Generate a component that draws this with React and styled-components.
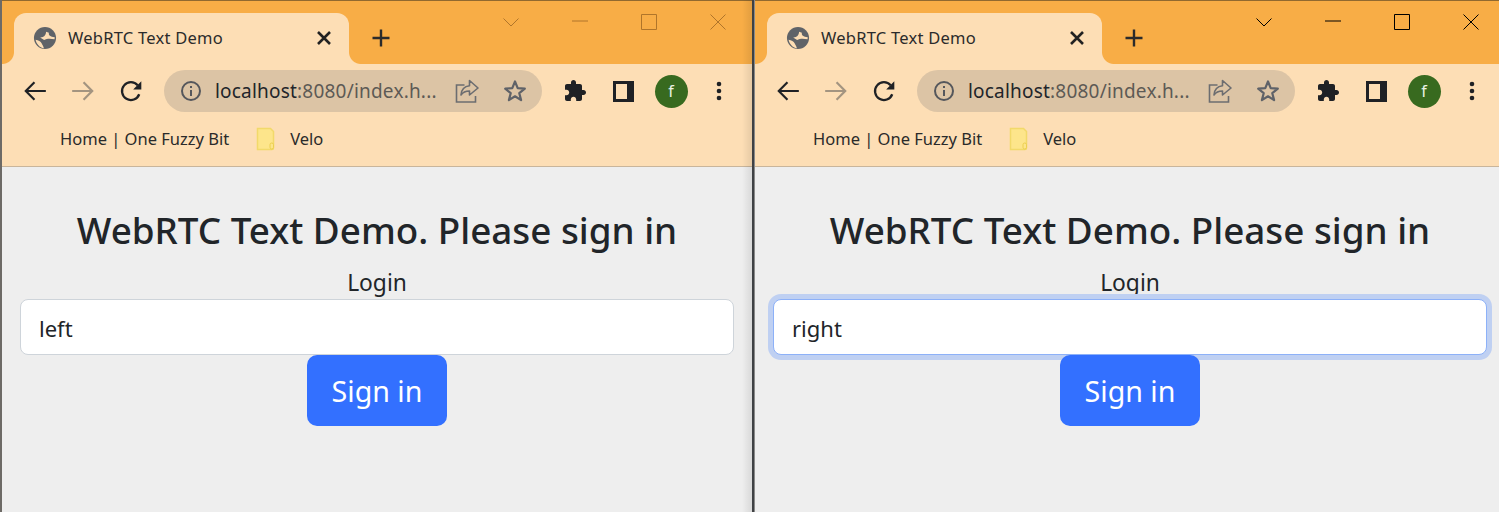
import React from "react";
import styled, { createGlobalStyle } from "styled-components";

const Global = createGlobalStyle`
  html, body { margin: 0; padding: 0; background: #eeeeee; overflow: hidden; }
  #root { width: 1499px; height: 512px; overflow: hidden; }
  * { box-sizing: border-box; }
`;

const FONT = `"Noto Sans", "Open Sans", sans-serif`;

const Desktop = styled.div`
  display: flex;
  width: 1499px;
  height: 512px;
  overflow: hidden;
  font-family: ${FONT};
`;

const BrowserWindow = styled.section`
  position: relative;
  flex: 0 0 auto;
  width: ${(p) => p.$width}px;
  height: 512px;
  padding-left: ${(p) => p.$edge}px;
  display: flex;
  flex-direction: column;
  background: #eeeeee;

  &::before {
    content: "";
    position: absolute;
    left: 0;
    top: 0;
    bottom: 0;
    width: ${(p) => p.$edge}px;
    background: #6d6a66;
  }
`;

const Divider = styled.div`
  position: relative;
  flex: 0 0 3px;
  height: 512px;
  background: linear-gradient(to right, #3f4144 0 2px, #8a8a8a 2px 3px);

  &::before {
    content: "";
    position: absolute;
    right: 3px;
    top: 0;
    bottom: 0;
    width: 10px;
    background: linear-gradient(to right, rgba(0, 0, 0, 0), rgba(0, 0, 0, 0.09));
  }
`;

const TabStrip = styled.header`
  height: 64px;
  flex: 0 0 64px;
  background: #f8ad46;
  border-top: 1px solid rgba(60, 50, 30, 0.55);
  display: flex;
  padding-left: 12px;
`;

const Tab = styled.div`
  position: relative;
  flex: 0 0 335px;
  height: 51px;
  margin-top: 12px;
  background: #fddeb5;
  border-radius: 12px 12px 0 0;
  display: flex;
  align-items: center;
  padding: 0 13px 1px 18px;
  color: #2a2a2a;

  &::before,
  &::after {
    content: "";
    position: absolute;
    bottom: 0;
    width: 12px;
    height: 12px;
  }
  &::before {
    left: -12px;
    background: radial-gradient(circle at 0 0, #f8ad46 11.5px, #fddeb5 12.5px);
  }
  &::after {
    right: -12px;
    background: radial-gradient(circle at 100% 0, #f8ad46 11.5px, #fddeb5 12.5px);
  }
`;

const TabTitle = styled.span`
  flex: 1;
  margin: 0 0 2px 10px;
  font-size: 16.5px;
  letter-spacing: 0.25px;
  white-space: nowrap;
  color: #2b2b2b;
`;

const NewTab = styled.div`
  flex: 0 0 36px;
  height: 36px;
  margin: 19px 0 0 14px;
  display: flex;
  align-items: center;
  justify-content: center;
`;

const WindowControls = styled.div`
  margin-left: auto;
  display: flex;
  height: 42px;
  color: ${(p) => (p.$inactive ? "#b0752a" : "#000")};
`;

const WindowButton = styled.div`
  flex: 0 0 69px;
  display: flex;
  align-items: center;
  justify-content: center;
`;

const Toolbar = styled.div`
  height: 54px;
  flex: 0 0 54px;
  background: #fddeb5;
  display: flex;
  align-items: center;
  padding-left: 9px;
`;

const ToolButton = styled.div`
  flex: 0 0 48px;
  height: 42px;
  display: flex;
  align-items: center;
  justify-content: center;
`;

const Omnibox = styled.div`
  flex: 0 0 378px;
  height: 42px;
  margin: 0 9px 0 9px;
  border-radius: 21px;
  background: #dcc4a5;
  display: flex;
  align-items: center;
  padding-left: 15px;
`;

const Address = styled.div`
  margin-left: 12px;
  width: 228px;
  font-size: 19px;
  letter-spacing: 0.2px;
  white-space: nowrap;
  color: #5d5a55;
`;

const Host = styled.span`
  color: #22242a;
`;

const OmniAction = styled.div`
  flex: 0 0 48px;
  height: 42px;
  display: flex;
  align-items: center;
  justify-content: center;
`;

const Avatar = styled.div`
  width: 33px;
  height: 33px;
  border-radius: 50%;
  background: #386a1f;
  color: #e9f3e4;
  font-size: 16px;
  display: flex;
  align-items: center;
  justify-content: center;
`;

const BookmarkBar = styled.nav`
  height: 49px;
  flex: 0 0 49px;
  background: #fddeb5;
  border-bottom: 1px solid #c9b59b;
  display: flex;
  align-items: center;
  padding: 0 0 6px 58px;
  font-size: 16.5px;
  color: #2a2a2a;
`;

const Bookmark = styled.span`
  white-space: nowrap;
  margin: 0 0 2px ${(p) => p.$gap || 0}px;
`;

const Page = styled.main`
  flex: 1;
  padding: 40px 18px 0;
  display: flex;
  flex-direction: column;
  align-items: center;
  background: #eeeeee;
  color: #212529;
`;

const Heading = styled.h1`
  margin: 0;
  font-size: 36.8px;
  line-height: 46px;
  font-weight: 500;
  white-space: nowrap;
`;

const Label = styled.label`
  font-size: 22.8px;
  line-height: 36px;
  margin: 12px 0 -2px;
`;

const LoginInput = styled.div`
  width: 100%;
  height: 56px;
  flex: 0 0 56px;
  background: #fff;
  border: 1px solid ${(p) => (p.$focused ? "#8db1f8" : "#ced4da")};
  border-radius: 8px;
  padding: 0 18px;
  font-size: 22px;
  line-height: 56px;
  color: #212529;
  box-shadow: ${(p) => (p.$focused ? "0 0 0 5px #bfd0f2" : "none")};
`;

const SignIn = styled.button`
  width: 140px;
  height: 71px;
  border: 0;
  border-radius: 10px;
  background: #3370ff;
  color: #fff;
  font-family: ${FONT};
  font-size: 28.6px;
  padding: 0;
`;

const Icon = ({ size = 24, children, ...rest }) => (
  <svg width={size} height={size} viewBox="0 0 24 24" fill="none" {...rest}>
    {children}
  </svg>
);

const Globe = () => (
  <Icon size={26} style={{ flex: "0 0 26px" }}>
    <circle cx="12" cy="12" r="10.2" fill="#5f6368" />
    <path
      d="M7.500 11.500C10.500 11.800 12.800 9.800 13 6.300L15.600 7.200C15 9.500 17 11 21 11.300L20.800 13.200C17.500 12.500 14 12.200 11.200 13.800z"
      fill="#fddeb5"
    />
    <path
      d="M3.300 13.600C6 14 8 15 9 17C9.500 18.500 10.500 19 11 21.500C7 20.800 4 17.500 3.300 13.600z"
      fill="#fddeb5"
    />
  </Icon>
);

const Cross = ({ size = 24, stroke = "#222", width = 2.6 }) => (
  <Icon size={size}>
    <path d="M6 6l12 12M18 6 6 18" stroke={stroke} strokeWidth={width} />
  </Icon>
);

const Plus = () => (
  <Icon size={24}>
    <path d="M12 3.500v17M3.500 12h17" stroke="#2b2b2b" strokeWidth="2.400" />
  </Icon>
);

const Back = ({ color = "#1f2125" }) => (
  <Icon size={26}>
    <path d="M22 12H3.500M11.500 4 3.500 12l8 8" stroke={color} strokeWidth="2" />
  </Icon>
);

const Forward = ({ color = "#a39480" }) => (
  <Icon size={26}>
    <path d="M2 12h18.500M12.500 4l8 8-8 8" stroke={color} strokeWidth="2" />
  </Icon>
);

const Reload = () => (
  <Icon size={26}>
    <path d="M19.600 15a8.200 8.200 0 1 1-1.400-8.200" stroke="#1f2125" strokeWidth="2.100" />
    <path d="M21.500 3v7.500H14z" fill="#1f2125" />
  </Icon>
);

const Info = () => (
  <Icon size={24}>
    <circle cx="12" cy="12" r="9" stroke="#55575c" strokeWidth="2" />
    <path d="M12 11v6M12 7v2" stroke="#55575c" strokeWidth="2" />
  </Icon>
);

const Share = () => (
  <Icon size={24}>
    <path d="M9.500 6H1.500v17h19v-6" stroke="#6c6d70" strokeWidth="1.600" />
    <path
      d="M14.500 1.500 23 9l-8.500 7v-4c-4 0-6.500 1-8.500 4 .4-5 3-8.600 8.500-9.200z"
      stroke="#6c6d70"
      strokeWidth="1.600"
      strokeLinejoin="round"
    />
  </Icon>
);

const Star = () => (
  <Icon size={24}>
    <path
      d="M12 2.500l2.700 6.600 7.100.5-5.500 4.600 1.800 6.900L12 17.300l-6.100 3.800 1.800-6.900-5.500-4.600 7.100-.5z"
      stroke="#5f6268"
      strokeWidth="2.200"
      strokeLinejoin="round"
    />
  </Icon>
);

const Puzzle = () => (
  <Icon size={24}>
    <path
      d="M20.500 11H19V7c0-1.100-.9-2-2-2h-4V3.500C13 2.120 11.880 1 10.500 1S8 2.120 8 3.500V5H4c-1.100 0-1.990.9-1.990 2v3.800H3.500c1.490 0 2.700 1.210 2.700 2.700s-1.210 2.700-2.700 2.700H2V20c0 1.100.9 2 2 2h3.800v-1.500c0-1.490 1.210-2.700 2.700-2.700 1.490 0 2.700 1.210 2.700 2.700V22H17c1.100 0 2-.9 2-2v-4h1.500c1.380 0 2.500-1.120 2.500-2.500S21.880 11 20.500 11z"
      fill="#1f2125"
    />
  </Icon>
);

const SidePanel = () => (
  <svg width="21" height="21" viewBox="0 0 21 21">
    <path fill="#1f2125" fillRule="evenodd" d="M0 0h21v21H0zM3 3v15h11V3z" />
  </svg>
);

const Dots = () => (
  <Icon size={24}>
    <circle cx="12" cy="5" r="2.300" fill="#1f2125" />
    <circle cx="12" cy="12" r="2.300" fill="#1f2125" />
    <circle cx="12" cy="19" r="2.300" fill="#1f2125" />
  </Icon>
);

const Folder = () => (
  <svg width="20" height="24" viewBox="0 0 20 24" style={{ marginLeft: 27, flex: "0 0 20px" }}>
    <path
      d="M1.500 1.500h13l3 3V21a1.500 1.500 0 0 1-1.500 1.500H1.500z"
      fill="#fde58b"
      stroke="#f2d96a"
      strokeWidth="1.500"
    />
    <rect x="14" y="16" width="3.500" height="6" rx="1.700" fill="#fde58b" stroke="#eccf4e" />
  </svg>
);

const ChevronIcon = () => (
  <svg width="16" height="9" viewBox="0 0 16 9">
    <path d="M.5.5 8 8 15.500.5" fill="none" stroke="currentColor" />
  </svg>
);

const MinIcon = () => (
  <svg width="16" height="16" viewBox="0 0 16 16" style={{ marginTop: -2 }}>
    <path d="M0 8h16" fill="none" stroke="currentColor" />
  </svg>
);

const MaxIcon = () => (
  <svg width="16" height="16" viewBox="0 0 16 16">
    <path d="M.5.5h15v15H.5z" fill="none" stroke="currentColor" />
  </svg>
);

const CloseIcon = () => (
  <svg width="16" height="16" viewBox="0 0 16 16">
    <path d="M.5.5l15 15M15.500.5l-15 15" fill="none" stroke="currentColor" />
  </svg>
);

const Browser = ({ width, edge, inactive, value, focused }) => (
  <BrowserWindow $width={width} $edge={edge}>
    <TabStrip>
      <Tab>
        <Globe />
        <TabTitle>WebRTC Text Demo</TabTitle>
        <Cross />
      </Tab>
      <NewTab>
        <Plus />
      </NewTab>
      <WindowControls $inactive={inactive}>
        <WindowButton><ChevronIcon /></WindowButton>
        <WindowButton><MinIcon /></WindowButton>
        <WindowButton><MaxIcon /></WindowButton>
        <WindowButton><CloseIcon /></WindowButton>
      </WindowControls>
    </TabStrip>
    <Toolbar>
      <ToolButton><Back /></ToolButton>
      <ToolButton><Forward /></ToolButton>
      <ToolButton><Reload /></ToolButton>
      <Omnibox>
        <Info />
        <Address>
          <Host>localhost</Host>:8080/index.h...
        </Address>
        <OmniAction><Share /></OmniAction>
        <OmniAction><Star /></OmniAction>
      </Omnibox>
      <ToolButton><Puzzle /></ToolButton>
      <ToolButton><SidePanel /></ToolButton>
      <ToolButton><Avatar>f</Avatar></ToolButton>
      <ToolButton><Dots /></ToolButton>
    </Toolbar>
    <BookmarkBar>
      <Bookmark>Home | One Fuzzy Bit</Bookmark>
      <Folder />
      <Bookmark $gap={14}>Velo</Bookmark>
    </BookmarkBar>
    <Page>
      <Heading>WebRTC Text Demo. Please sign in</Heading>
      <Label>Login</Label>
      <LoginInput $focused={focused}>{value}</LoginInput>
      <SignIn>Sign in</SignIn>
    </Page>
  </BrowserWindow>
);

export default function App() {
  return (
    <>
      <Global />
      <Desktop>
        <Browser width={752} edge={2} inactive value="left" />
        <Divider />
        <Browser width={750} edge={0} value="right" focused />
      </Desktop>
    </>
  );
}
